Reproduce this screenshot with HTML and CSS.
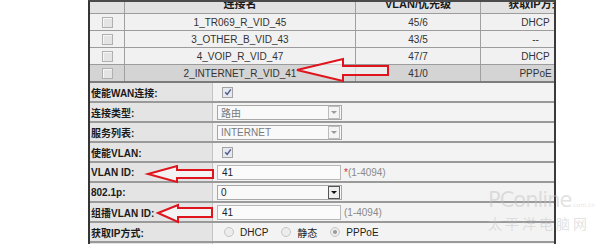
FILE: index.html
```html
<!DOCTYPE html>
<html lang="zh-CN">

<head>
  <meta charset="UTF-8">
  <meta name="viewport" content="width=device-width, initial-scale=1.0">
  <title>WAN 连接配置</title>
  <link rel="stylesheet" href="styles.css">
</head>

<body>
  <div class="frame">
    <div class="conn-list">
      <div class="conn-row conn-head">
        <div class="cell"></div>
        <div class="cell">连接名</div>
        <div class="cell">VLAN/优先级</div>
        <div class="cell">获取IP方式</div>
      </div>
      <div class="conn-row">
        <div class="cell"><span class="box"></span></div>
        <div class="cell">1_TR069_R_VID_45</div>
        <div class="cell">45/6</div>
        <div class="cell">DHCP</div>
      </div>
      <div class="conn-row">
        <div class="cell"><span class="box"></span></div>
        <div class="cell">3_OTHER_B_VID_43</div>
        <div class="cell">43/5</div>
        <div class="cell">--</div>
      </div>
      <div class="conn-row">
        <div class="cell"><span class="box"></span></div>
        <div class="cell">4_VOIP_R_VID_47</div>
        <div class="cell">47/7</div>
        <div class="cell">DHCP</div>
      </div>
      <div class="conn-row selected">
        <div class="cell"><span class="box"></span></div>
        <div class="cell">2_INTERNET_R_VID_41</div>
        <div class="cell">41/0</div>
        <div class="cell">PPPoE</div>
      </div>
    </div>

    <div class="form">
      <div class="form-row">
        <div class="label">使能WAN连接:</div>
        <div class="value">
          <span class="check"><svg width="8" height="8" viewBox="0 0 8 8"><path d="M1.2 4.2 L3.2 6.4 L6.8 1.4" /></svg></span>
        </div>
      </div>
      <div class="form-row">
        <div class="label">连接类型:</div>
        <div class="value">
          <div class="select disabled"><span class="select-text">路由</span><span class="select-btn"></span></div>
        </div>
      </div>
      <div class="form-row">
        <div class="label">服务列表:</div>
        <div class="value">
          <div class="select disabled"><span class="select-text">INTERNET</span><span class="select-btn"></span></div>
        </div>
      </div>
      <div class="form-row">
        <div class="label">使能VLAN:</div>
        <div class="value">
          <span class="check"><svg width="8" height="8" viewBox="0 0 8 8"><path d="M1.2 4.2 L3.2 6.4 L6.8 1.4" /></svg></span>
        </div>
      </div>
      <div class="form-row">
        <div class="label">VLAN ID:</div>
        <div class="value">
          <input class="text-input" type="text" value="41">
          <span class="hint"><span class="req">*</span>(1-4094)</span>
        </div>
      </div>
      <div class="form-row">
        <div class="label">802.1p:</div>
        <div class="value">
          <div class="select"><span class="select-text">0</span><span class="select-btn"></span></div>
        </div>
      </div>
      <div class="form-row">
        <div class="label">组播VLAN ID:</div>
        <div class="value">
          <input class="text-input" type="text" value="41">
          <span class="hint">(1-4094)</span>
        </div>
      </div>
      <div class="form-row">
        <div class="label">获取IP方式:</div>
        <div class="value radios">
          <span class="radio"></span><span class="radio-label">DHCP</span>
          <span class="radio"></span><span class="radio-label">静态</span>
          <span class="radio on"></span><span class="radio-label">PPPoE</span>
        </div>
      </div>
      <div class="form-row">
        <div class="label"></div>
        <div class="value"></div>
      </div>
    </div>
  </div>

  <!-- red callout arrows drawn over the screenshot -->
  <svg class="arrows" width="600" height="244" viewBox="0 0 600 244">
    <polygon points="297,70 343,59 343,66 388,66 388,75 343,75 343,81" />
    <polygon points="148,174 177,166 177,170 213,170 213,178 177,178 177,182" />
    <polygon points="158,213 178,205 178,208 212,208 212,217 178,217 178,222" />
  </svg>

  <div class="watermark">
    <div class="wm-logo">PConline<span class="wm-dom">.com.cn</span></div>
    <div class="wm-cn">太平洋电脑网</div>
  </div>
</body>

</html>
```

FILE: styles.css
```css
body {
  margin: 0;
  height: 244px;
  overflow: hidden;
  position: relative;
  background: #fff;
  font-family: "Liberation Sans", "Noto Sans CJK SC", sans-serif;
  font-size: 10px;
  color: #222;
}

.frame {
  margin-left: 88px;
  width: 468px;
  height: 244px;
  box-sizing: border-box;
  border-left: 2px solid #353535;
  border-right: 2px solid #3a3a3a;
  border-top: 2px solid #4a4a4a;
  overflow: hidden;
  background: #f2f2f2;
}

/* connection list */
.conn-list {
  width: 500px;
  margin-top: -9px;
}

.conn-row {
  display: grid;
  grid-template-columns: 34px 231px 125px 110px;
  height: 17px;
  box-sizing: border-box;
  border-bottom: 1px solid #9c9c9c;
  background: #f1f1f1;
}

.conn-row .cell {
  display: flex;
  align-items: center;
  justify-content: center;
  border-left: 1px solid #a0a0a0;
  color: #333;
}

.conn-row .cell:first-child {
  border-left: none;
}

.conn-head {
  height: 21px;
  background: #e2e2e2;
  font-size: 11px;
  font-weight: bold;
}

.conn-head .cell {
  color: #1a1a1a;
}

.conn-row.selected {
  height: 18px;
  background: #d4d4d4;
  border-bottom: 2px solid #7c7c7c;
}

.box {
  width: 9px;
  height: 9px;
  border: 1px solid #b0b0b0;
  background: #e4e4e4;
  box-shadow: inset 1px 1px 0 #f6f6f6;
}

/* form */
.form-row {
  display: flex;
  height: 20px;
  box-sizing: border-box;
  border-bottom: 2px solid #9a9a9a;
}

.label {
  width: 123px;
  flex: none;
  display: flex;
  align-items: center;
  padding-left: 1px;
  box-sizing: border-box;
  background: #e4e4e4;
  border-right: 1px solid #c4c4c4;
  font-weight: bold;
  color: #1a1a1a;
}

.value {
  flex: 1;
  display: flex;
  align-items: center;
  padding-left: 4px;
  background: #f3f3f3;
}

.check {
  width: 9px;
  height: 9px;
  margin-left: 5px;
  border: 1px solid #a4a4a4;
  background: #e6e9f0;
  display: flex;
  align-items: center;
  justify-content: center;
}

.check path {
  fill: none;
  stroke: #4a5a8c;
  stroke-width: 1.4;
}

.select {
  width: 125px;
  height: 15px;
  box-sizing: border-box;
  border: 1px solid #a8a8a8;
  background: #f9f9f9;
  display: flex;
  align-items: center;
  justify-content: space-between;
}

.select-text {
  padding-left: 3px;
  color: #222;
}

.select.disabled .select-text {
  color: #7a7a7a;
}

.select-btn {
  width: 10px;
  height: 11px;
  margin-right: 1px;
  border: 1px solid #555;
  background: #eee;
  position: relative;
}

.select-btn::after {
  content: "";
  position: absolute;
  left: 2px;
  top: 4px;
  border-left: 3px solid transparent;
  border-right: 3px solid transparent;
  border-top: 3px solid #111;
}

.select.disabled .select-btn {
  border-color: #bcbcbc;
  background: #f4f4f4;
}

.select.disabled .select-btn::after {
  border-top-color: #9a9a9a;
}

.text-input {
  width: 124px;
  height: 15px;
  box-sizing: border-box;
  margin: 0;
  padding: 0 0 0 4px;
  border: 1px solid #b8b8b8;
  background: #fbfbfb;
  font-family: inherit;
  font-size: 10px;
  color: #222;
}

.hint {
  margin-left: 3px;
  color: #8a8a8a;
}

.req {
  color: #d03030;
}

.radios {
  padding-left: 11px;
}

.radio {
  width: 8px;
  height: 8px;
  border: 1px solid #c6c6c6;
  border-radius: 50%;
  background: #ececec;
  position: relative;
}

.radio.on::after {
  content: "";
  position: absolute;
  left: 2px;
  top: 2px;
  width: 4px;
  height: 4px;
  border-radius: 50%;
  background: #9a9a9a;
}

.radio-label {
  margin: 0 13px 0 6px;
  color: #222;
}

/* overlays */
.arrows {
  position: absolute;
  left: 0;
  top: 0;
  pointer-events: none;
}

.arrows polygon {
  fill: rgba(255, 255, 255, 0.55);
  stroke: #e0141c;
  stroke-width: 2;
  stroke-linejoin: miter;
}

.watermark {
  position: absolute;
  left: 488px;
  top: 190px;
  color: rgba(190, 190, 190, 0.45);
  pointer-events: none;
}

.wm-logo {
  font-family: "DejaVu Sans", sans-serif;
  font-size: 21px;
  letter-spacing: -1px;
  line-height: 21px;
}

.wm-dom {
  font-size: 6px;
  letter-spacing: 0;
}

.wm-cn {
  font-family: "Noto Sans CJK SC", sans-serif;
  font-size: 14px;
  letter-spacing: 3px;
  line-height: 16px;
}
```
